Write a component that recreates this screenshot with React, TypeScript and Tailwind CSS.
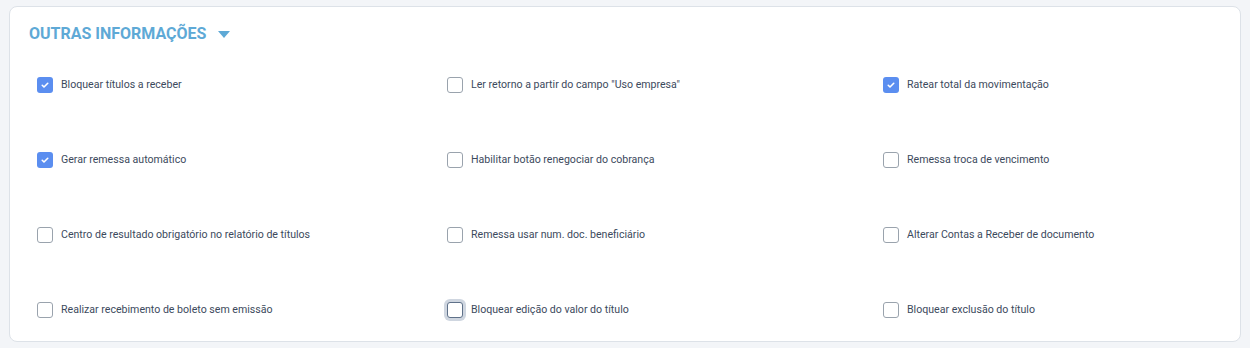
import React from "react";

type Item = { label: string; checked?: boolean; focused?: boolean };

const items: Item[] = [
  { label: "Bloquear títulos a receber", checked: true },
  { label: 'Ler retorno a partir do campo "Uso empresa"' },
  { label: "Ratear total da movimentação", checked: true },
  { label: "Gerar remessa automático", checked: true },
  { label: "Habilitar botão renegociar do cobrança" },
  { label: "Remessa troca de vencimento" },
  { label: "Centro de resultado obrigatório no relatório de títulos" },
  { label: "Remessa usar num. doc. beneficiário" },
  { label: "Alterar Contas a Receber de documento" },
  { label: "Realizar recebimento de boleto sem emissão" },
  { label: "Bloquear edição do valor do título", focused: true },
  { label: "Bloquear exclusão do título" },
];

function Check({ checked, focused }: { checked?: boolean; focused?: boolean }) {
  if (checked) {
    return (
      <span className="flex h-4 w-4 shrink-0 items-center justify-center rounded-[3px] bg-[#5b8ef0]">
        <svg viewBox="0 0 16 16" className="h-2 w-2" fill="none">
          <path
            d="M2.5 8.5l3.5 3.5 7.5-7.5"
            stroke="#fff"
            strokeWidth={3.2}
            strokeLinecap="round"
            strokeLinejoin="round"
          />
        </svg>
      </span>
    );
  }
  return (
    <span
      className={
        focused
          ? "h-4 w-4 shrink-0 rounded-[3px] border border-[#5f7189] bg-white ring-[3px] ring-[#cfd6e0]"
          : "h-4 w-4 shrink-0 rounded-[3px] border border-[#9aa3ad] bg-white"
      }
    />
  );
}

export default function App() {
  return (
    <div className="h-[348px] w-[1250px] bg-[#f3f5f8] px-[9px] pt-[6px] font-['Roboto',sans-serif]">
      <div className="h-[336px] rounded-lg border border-[#dde2e8] bg-white pl-[19px] pt-[16px]">
        <div className="flex items-center gap-[12px]">
          <h2 className="text-[16px] font-bold uppercase leading-[22px] text-[#5ea9d6]">
            Outras informações
          </h2>
          <svg viewBox="0 0 12 7" className="mt-[1px] h-[7px] w-3">
            <path d="M0 0h12L6 7z" fill="#5ea9d6" />
          </svg>
        </div>

        {/* opções */}
        <div className="mt-[32px] ml-2 grid grid-cols-[410px_436px_1fr] gap-y-[59px]">
          {items.map((it) => (
            <label key={it.label} className="flex items-center gap-2 text-[10.6px] leading-4 text-[#3c4a5d]">
              <Check checked={it.checked} focused={it.focused} />
              <span>{it.label}</span>
            </label>
          ))}
        </div>
      </div>
    </div>
  );
}
